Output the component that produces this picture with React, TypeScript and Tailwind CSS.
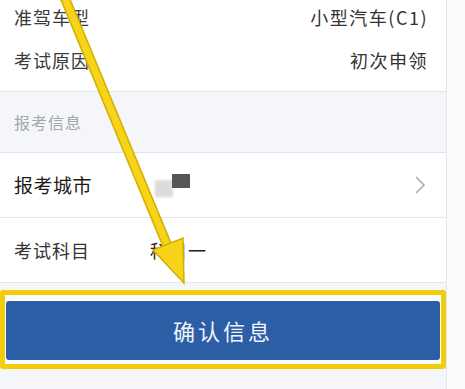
import React from "react";

const font = { fontFamily: '"Noto Sans CJK SC", "Noto Sans", sans-serif' };

const InfoRow = ({ label, value, h }: { label: string; value: string; h: string }) => (
  <div className={`flex items-center justify-between pl-[14px] pr-[18px] ${h}`}>
    <span className="text-[18px] tracking-[1px] text-[#3a3a3a]">{label}</span>
    <span className="text-[18px] tracking-[1.5px] text-[#333]">{value}</span>
  </div>
);

const ArrowOverlay = () => (
  <svg
    className="pointer-events-none absolute left-0 top-0"
    width="465"
    height="389"
    viewBox="0 0 465 389"
  >
    <line x1="64" y1="-4" x2="170" y2="252" stroke="#d2b000" strokeWidth="10" />
    <line x1="64" y1="-4" x2="170" y2="252" stroke="#f7d41a" strokeWidth="7" />
    <polygon points="184,283 153,250 183,238" fill="#f7d41a" stroke="#d2b000" strokeWidth="1.5" />
  </svg>
);

export default function App() {
  return (
    <div className="relative h-[389px] w-[465px] overflow-hidden bg-[#fbfbfc]" style={font}>
      <div className="flex h-full w-[447px] flex-col border-r border-[#e6e8ec] bg-[#f4f6f9]">
        {/* driving licence info */}
        <div className="bg-white pb-[5px]">
          <InfoRow label="准驾车型" value="小型汽车(C1)" h="h-[34px]" />
          <InfoRow label="考试原因" value="初次申领" h="h-[52px]" />
        </div>

        {/* section header */}
        <div className="flex h-[62px] items-center border-y border-[#e2e5e9] pl-[14px]">
          <span className="text-[16px] tracking-[1px] text-[#a3a6ab]">报考信息</span>
        </div>

        {/* city */}
        <div className="flex h-[65px] items-center border-b border-[#e2e5e9] bg-white pl-[14px] pr-[18px]">
          <span className="w-[141px] text-[19px] tracking-[0.5px] text-[#1a1a1a]">报考城市</span>
          <div className="flex flex-1 items-start">
            <div className="mt-[6px] h-[17px] w-[18px] bg-[#dcdcdc] blur-[1px]" />
            <div className="-ml-[1px] h-[14px] w-[18px] bg-[#555] blur-[0.5px]" />
          </div>
          <svg width="12" height="18" viewBox="0 0 12 18" className="mr-[2px]">
            <polyline points="2,1 10,9 2,17" fill="none" stroke="#a9acb1" strokeWidth="1.6" />
          </svg>
        </div>

        {/* subject */}
        <div className="flex h-[65px] items-center border-b border-[#e2e5e9] bg-white pl-[14px]">
          <span className="w-[136px] text-[18px] tracking-[1px] text-[#333]">考试科目</span>
          <span className="text-[18px] tracking-[1px] text-[#222]">科目一</span>
        </div>

        {/* confirm button */}
        <div className="mt-[7px] rounded-[3px] border-[5px] border-[#f2cd0c] bg-white px-[1px] pb-[4px] pt-[6px]">
          <button className="flex h-[59px] w-full items-center justify-center rounded-[3px] bg-[#2c5ea6] text-[22px] tracking-[3px] text-[#eef4fb]">
            确认信息
          </button>
        </div>
      </div>
      <ArrowOverlay />
    </div>
  );
}
